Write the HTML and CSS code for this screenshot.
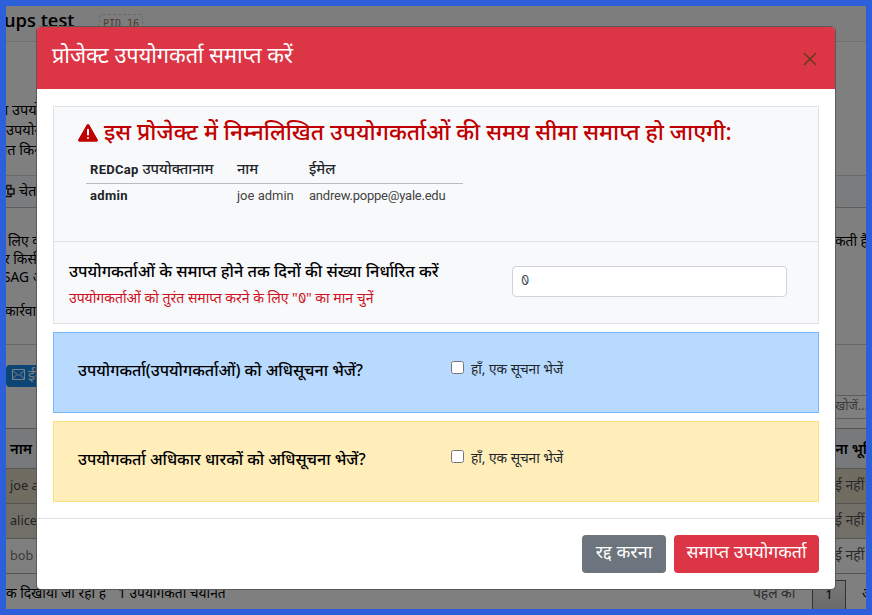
FILE: index.html
```
<!DOCTYPE html>
<html lang="hi">
<head>
<meta charset="utf-8">
<title>प्रोजेक्ट उपयोगकर्ता समाप्त करें</title>
<link rel="stylesheet" href="styles.css">
</head>
<body>
<div class="frame">
  <main class="page">
    <header class="topbar"><b class="title">ups test</b><span class="pid">PID 16</span></header>
    <section class="intro"><p class="l1">या उपयोग</p><p class="l2">उपयोग</p><p class="l3">गत किया</p></section>
    <nav class="tabs">
      <svg class="copy" viewBox="0 0 12 14"><path d="M3.500 1.500h4.500v3M3.500 1.500v3M5 5h6v5H5zM0 4.500h4M2 10.500v2h6v-2" /></svg>
      <span>चेतावनी</span>
    </nav>
    <section class="details">
      <div class="line"><span class="a">लिए कर</span><span class="right">कती है</span></div>
      <p class="b">र किसी</p><p class="c">SAG अ</p><p class="d">कार्रवाई</p>
    </section>
    <section class="tools">
      <div class="mail"><svg class="env" viewBox="0 0 13 11"><path d="M.5.5h12v10H.5zM.5 1.500l6 5 6-5M.5 10l4-4M12.500 10l-4-4"/></svg>ईमेल</div>
      <div class="search">खोजें...</div>
    </section>
    <div class="row head"><span>नाम</span><span class="right">ना भूमि</span></div>
    <div class="row tan"><span>joe admin</span><span class="right">ई नहीं</span></div>
    <div class="row tan light"><span>alice</span><span class="right">ई नहीं</span></div>
    <div class="row plain"><span>bob</span><span class="right">ई नहीं</span></div>
    <footer class="pager"><span class="count">क दिखाया जा रहा है</span><span class="sel">1 उपयोगकर्ता चयनित</span><span class="prev">पहले का</span><span class="num">1</span><span class="next">अगला</span></footer>
  </main>
  <div class="backdrop"></div>
</div>
<div class="modal">
  <header class="modal-head"><h1>प्रोजेक्ट उपयोगकर्ता समाप्त करें</h1>
    <svg class="close" viewBox="0 0 14 14"><path d="M1 1l12 12M13 1L1 13"/></svg></header>
  <div class="modal-body">
    <section class="panel users">
      <h2><svg class="warn" viewBox="0 0 20 18"><path fill="#c00000" d="M8.700.8a1.500 1.500 0 0 1 2.600 0l8.400 14.700a1.500 1.500 0 0 1-1.300 2.300H1.600a1.500 1.500 0 0 1-1.300-2.300z"/><path fill="none" stroke="#fff" stroke-width="2" stroke-linecap="round" d="M10 5.800v4.700M10 14v.1"/></svg><span>इस प्रोजेक्ट में निम्नलिखित उपयोगकर्ताओं की समय सीमा समाप्त हो जाएगी:</span></h2>
      <div class="table">
        <div class="tr th"><span><b>REDCap</b> उपयोक्तानाम</span><span>नाम</span><span>ईमेल</span></div>
        <div class="tr td"><b>admin</b><span>joe admin</span><span class="email">andrew.poppe@yale.edu</span></div>
      </div>
    </section>
    <section class="panel days">
      <div class="label"><p class="q q0">उपयोगकर्ताओं के समाप्त होने तक दिनों की संख्या निर्धारित करें</p>
      <p class="hint">उपयोगकर्ताओं को तुरंत समाप्त करने के लिए "<i class="zero">0</i>" का मान चुनें</p></div>
      <div class="input"><i class="zero">0</i></div>
    </section>
    <section class="notify blue"><p class="q">उपयोगकर्ता(उपयोगकर्ताओं) को अधिसूचना भेजें?</p><label><input type="checkbox"><span>हाँ, एक सूचना भेजें</span></label></section>
    <section class="notify yellow"><p class="q">उपयोगकर्ता अधिकार धारकों को अधिसूचना भेजें?</p><label><input type="checkbox"><span>हाँ, एक सूचना भेजें</span></label></section>
  </div>
  <footer class="modal-foot"><button class="cancel">रद्द करना</button><button class="expire">समाप्त उपयोगकर्ता</button></footer>
</div>
</body>
</html>
```
FILE: styles.css
```
* { box-sizing: border-box; }
body { margin: 0; width: 872px; height: 615px; overflow: hidden; position: relative; font-family: "Noto Sans", "Liberation Sans", sans-serif; font-size: 13px; color: #212529; }
p, h1, h2 { margin: 0; font-weight: 400; white-space: nowrap; }
i { font-style: normal; }
.frame { width: 872px; height: 615px; border: 6px solid #2e5fdb; position: relative; overflow: hidden; }
.page { height: 603px; background: #fff; color: #000; overflow: hidden; white-space: nowrap; }
.backdrop { position: absolute; inset: 0; background: rgba(0,0,0,.5); }
.right { margin-left: auto; width: 31px; }

.topbar { height: 36px; display: flex; border-bottom: 1px solid #e4e2dc; background: #fafafa; }
.title { font: 600 18.300px/28px "Open Sans", sans-serif; width: 94px; margin-left: -2px; padding-left: 0; margin-right: 1px; }
.pid { margin-top: 8px; width: 44px; height: 18px; border: 1px dashed #d8d2ca; border-radius: 4px; font: 10px/17px "DejaVu Sans Mono", monospace; color: #9b7658; text-align: center; }
.intro { height: 133px; padding-top: 57px; line-height: 20px; font-size: 14.600px; }
.l1 { margin-left: -10px; }
.l3 { margin-left: -7px; }
.tabs { height: 33px; border-top: 1px solid #d8d4cc; border-bottom: 1px solid #bbb; background: #f7f8fa; display: flex; gap: 4px; line-height: 29px; font-size: 14.500px; }
.copy { width: 12px; height: 14px; margin: 8px 0 0 -3px; fill: none; stroke: #222; stroke-width: 1.500; }
.details { height: 137px; padding-top: 24px; line-height: 18px; font-size: 13.800px; border-bottom: 1px solid #d8ccc4; }
.line { display: flex; }
.a { margin-left: 2px; }
.b { margin-left: -2px; }
.c { margin-left: -3px; }
.d { margin: 16px 0 0 -1px; }
.tools { height: 83px; display: flex; justify-content: space-between; }
.mail { margin-top: 20px; width: 80px; height: 22px; border-radius: 4px; background: #168cec; color: #fff; line-height: 19px; font-size: 14px; padding-left: 6px; display: flex; gap: 3px; }
.env { width: 13px; height: 11px; margin-top: 4px; fill: none; stroke: #fff; }
.search { margin-top: 50px; width: 31px; height: 24px; border: solid #bbb; border-width: 1px 0; color: #777; line-height: 19px; font-size: 12.500px; }
.row { display: flex; height: 35px; padding-left: 4px; border-top: 1px solid #aaa; line-height: 32px; font-size: 12.700px; color: #444; }
.head { height: 40px; font-weight: 600; font-size: 14.700px; line-height: 39px; color: #000; background: #f0f2f4; }
.tan { background: #e2d8c4; }
.light { background: #e5dfd3; }
.plain { color: #777; }
.row .right { color: #555; font-size: 14px; }
.row.head .right { color: #000; font-size: 14.700px; }
.pager { height: 38px; border-top: 1px solid #aaa; display: flex; line-height: 38px; font-size: 13.800px; }
.pager span { flex: none; }
.count { width: 112px; }
.sel { width: 635px; }
.prev { width: 59px; color: #555; }
.pager .num { width: 34px; height: 36px; margin-top: 6px; border: 1px solid #666; background: linear-gradient(#f0f0f0, #d0d0d0); line-height: 27px; text-align: center; font-size: 13px; }
.next { padding-left: 16px; }

.modal { position: absolute; left: 37px; top: 27px; width: 798px; height: 562px; border-radius: 4px; background: #fff; overflow: hidden; box-shadow: 0 0 0 1px #595959; }
.modal-head { height: 62px; background: #dc3545; color: #fff; display: flex; align-items: flex-start; justify-content: space-between; padding: 0 18px 0 15px; }
h1 { font-size: 21.700px; line-height: 55px; }
.close { width: 14px; height: 14px; margin-top: 25px; fill: none; stroke: #6e3a1b; stroke-width: 1.700; }
.modal-body { height: 429px; padding: 17px 16px 0 16px; }
.panel { border: 1px solid #dee2e6; background: #f8f9fb; }
.users { height: 136px; padding: 8px 0 0 24px; }
h2 { display: flex; align-items: flex-start; gap: 6px; color: #c00000; font-weight: 500; font-size: 22.760px; line-height: 34px; }
.warn { flex: none; width: 20px; height: 18px; margin-top: 9px; }
.table { width: 377px; margin: 8px 0 0 8px; }
.tr { display: grid; grid-template-columns: 147px 72px 1fr; padding-left: 4px; white-space: nowrap; }
.th { height: 27px; line-height: 22px; border-bottom: 1px solid #bbb; font-weight: 500; font-size: 14.600px; }
.th b, .td { font-family: "Roboto", sans-serif; font-size: 13px; }
.th b { letter-spacing: .3px; }
.td { line-height: 24px; color: #444; }
.td b { color: #212529; letter-spacing: .3px; }
.email { letter-spacing: -.22px; }
.days { height: 83px; margin-top: -1px; padding: 16px 31px 0 16px; display: flex; justify-content: space-between; }
.q { font-size: 16.050px; font-weight: 500; line-height: 26px; color: #000; }
.q0 { font-size: 16.280px; margin-left: -1px; }
.hint { font-size: 14px; line-height: 27px; color: #d00f20; margin-left: -1px; }
.zero { display: inline-block; font-family: "Inter", sans-serif; font-size: 13px; font-feature-settings: "zero"; transform: scaleX(-1); }
.input { width: 275px; height: 31px; margin-top: 8px; border: 1px solid #ced4da; border-radius: 4px; background: #fff; padding-left: 8px; line-height: 27px; color: #495057; }
.notify { height: 81px; margin-top: 8px; border: 1px solid #7ab8fa; background: #b8daff; display: grid; grid-template-columns: 373px 1fr; padding: 24px 0 0 24px; align-items: start; }
.yellow { border-color: #ffdf7e; background: #ffeeba; }
label { display: flex; gap: 7px; line-height: 23px; font-size: 13.700px; }
input { width: 13px; height: 13px; margin: 4px 0 0; }
.modal-foot { height: 71px; border-top: 1px solid #dee2e6; display: flex; justify-content: flex-end; gap: 8px; padding: 16px 16px 0 0; }
button { height: 38px; border: 0; border-radius: 4px; color: #fff; font: 17.700px/32px "Noto Sans", sans-serif; padding: 0 0 6px; white-space: nowrap; }
.cancel { width: 84px; background: #6c757d; font-size: 18px; }
.expire { width: 145px; background: #dc3545; }
```
